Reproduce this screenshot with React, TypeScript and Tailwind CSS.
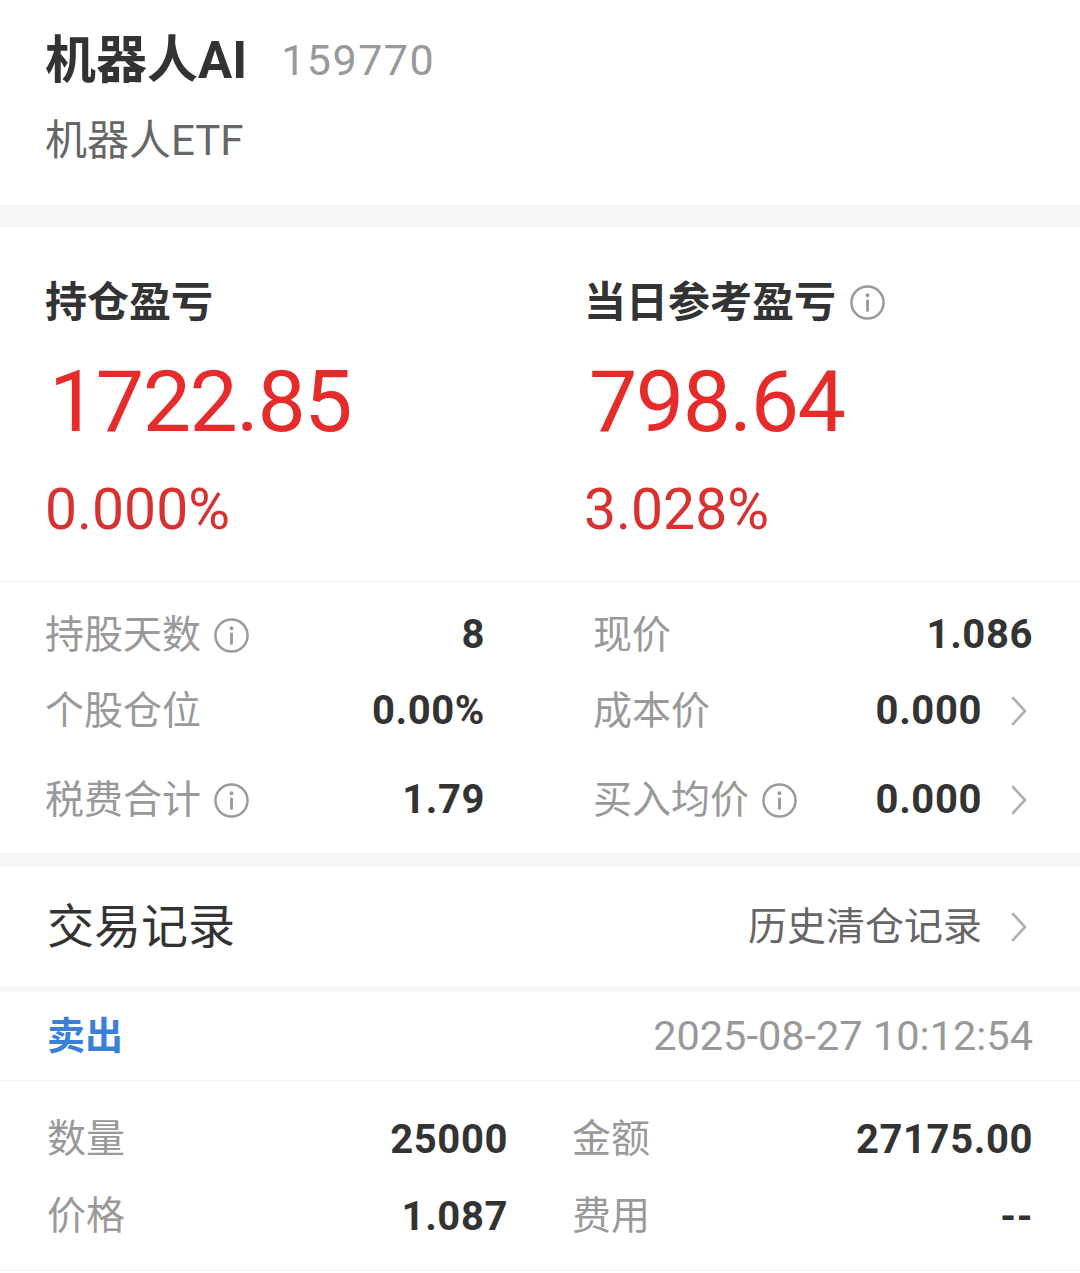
const CJK = "font-['Roboto','Noto_Sans_CJK_SC',sans-serif]";

function InfoIcon({ size = 35 }: { size?: number }) {
  return (
    <svg width={size} height={size} viewBox="0 0 34 34" fill="none" className="shrink-0">
      <circle cx="17" cy="17" r="15.6" stroke="#9a9a9a" strokeWidth="2.4" />
      <circle cx="17" cy="10" r="1.9" fill="#9a9a9a" />
      <rect x="15.6" y="14" width="2.8" height="12" rx="1.2" fill="#9a9a9a" />
    </svg>
  );
}

function Arrow() {
  return (
    <svg width="18" height="32" viewBox="0 0 18 32" fill="none" className="shrink-0 mr-[5px]">
      <path d="M3 3 L15 16 L3 29" stroke="#b0b0b0" strokeWidth="2.6" strokeLinecap="round" strokeLinejoin="round" />
    </svg>
  );
}

interface StatProps {
  label: string;
  value: string;
  info?: boolean;
  arrow?: boolean;
}

function Stat({ label, value, info, arrow }: StatProps) {
  return (
    <div className="flex items-center h-full">
      <span className="text-[39px] text-[#999999]">{label}</span>
      {info && <span className="ml-[13px] flex"><InfoIcon /></span>}
      <span className="ml-auto text-[40px] font-bold text-[#333333] tracking-[0.6px]">{value}</span>
      {arrow && <span className="ml-[28px] flex"><Arrow /></span>}
    </div>
  );
}

export default function App() {
  return (
    <div className={`w-[1080px] min-h-[1273px] bg-white ${CJK}`}>
      {/* header */}
      <div className="h-[204px] pt-[30px] pl-[45px]">
        <div className="h-[60px] flex items-center">
          <span className="text-[51px] font-bold text-[#333333] leading-none">机器人AI</span>
          <span className="ml-[34px] text-[43px] text-[#999999] leading-none tracking-[1.5px]">159770</span>
        </div>
        <div className="mt-[31px] h-[40px] leading-[40px] text-[42px] text-[#666666]">机器人ETF</div>
      </div>

      <div className="h-[24px] bg-[#f5f6f8]" />

      {/* profit */}
      <div className="flex pl-[45px] pt-[49px] pb-[39px] border-b border-[#f0f0f0]">
        <div className="w-[542px]">
          <div className="h-[50px] flex items-center text-[42px] font-bold text-[#333333]">持仓盈亏</div>
          <div className="mt-[24px] h-[100px] flex items-center text-[86px] text-[#e62b2b] pl-[4px] tracking-[-1.5px]">1722.85</div>
          <div className="mt-[27px] h-[64px] flex items-center text-[57px] text-[#d93030]">0.000%</div>
        </div>
        <div className="flex-1 -ml-[3px]">
          <div className="h-[50px] flex items-center text-[42px] font-bold text-[#333333]">
            当日参考盈亏
            <span className="ml-[14px] flex"><InfoIcon /></span>
          </div>
          <div className="mt-[24px] h-[100px] flex items-center text-[86px] text-[#e62b2b] pl-[5px] tracking-[-1.5px]">798.64</div>
          <div className="mt-[27px] h-[64px] flex items-center text-[57px] text-[#d93030]">3.028%</div>
        </div>
      </div>

      {/* holding details */}
      <div className="grid grid-cols-[440px_440px] gap-x-[108px] pl-[45px] pt-[15px] pb-[14px]">
        <div className="h-[76px]"><Stat label="持股天数" value="8" info /></div>
        <div className="h-[76px]"><Stat label="现价" value="1.086" /></div>
        <div className="h-[76px]"><Stat label="个股仓位" value="0.00%" /></div>
        <div className="h-[76px]"><Stat label="成本价" value="0.000" arrow /></div>
        <div className="h-[76px] mt-[13px]"><Stat label="税费合计" value="1.79" info /></div>
        <div className="h-[76px] mt-[13px]"><Stat label="买入均价" value="0.000" info arrow /></div>
      </div>

      <div className="h-[15px] bg-[#f5f6f8]" />

      {/* trade records header */}
      <div className="h-[120px] flex items-center pl-[47px] pr-[47px]">
        <span className="text-[47px] text-[#333333]">交易记录</span>
        <span className="ml-auto text-[39px] text-[#666666]">历史清仓记录</span>
        <span className="ml-[28px] flex"><Arrow /></span>
      </div>

      <div className="h-[5px] bg-[#f5f6f8]" />

      {/* trade item */}
      <div className="h-[89px] flex items-center px-[47px] border-b border-[#f2f2f2]">
        <span className="text-[38px] font-bold text-[#3a7fd8]">卖出</span>
        <span className="ml-auto text-[41.5px] text-[#999999]">2025-08-27 10:12:54</span>
      </div>

      <div className="grid grid-cols-[461px_461px] gap-x-[64px] pl-[47px] pt-[20px] pb-[15px] border-b border-[#f2f2f2]">
        <div className="h-[77px]"><Stat label="数量" value="25000" /></div>
        <div className="h-[77px]"><Stat label="金额" value="27175.00" /></div>
        <div className="h-[77px]"><Stat label="价格" value="1.087" /></div>
        <div className="h-[77px]"><Stat label="费用" value="--" /></div>
      </div>
    </div>
  );
}
